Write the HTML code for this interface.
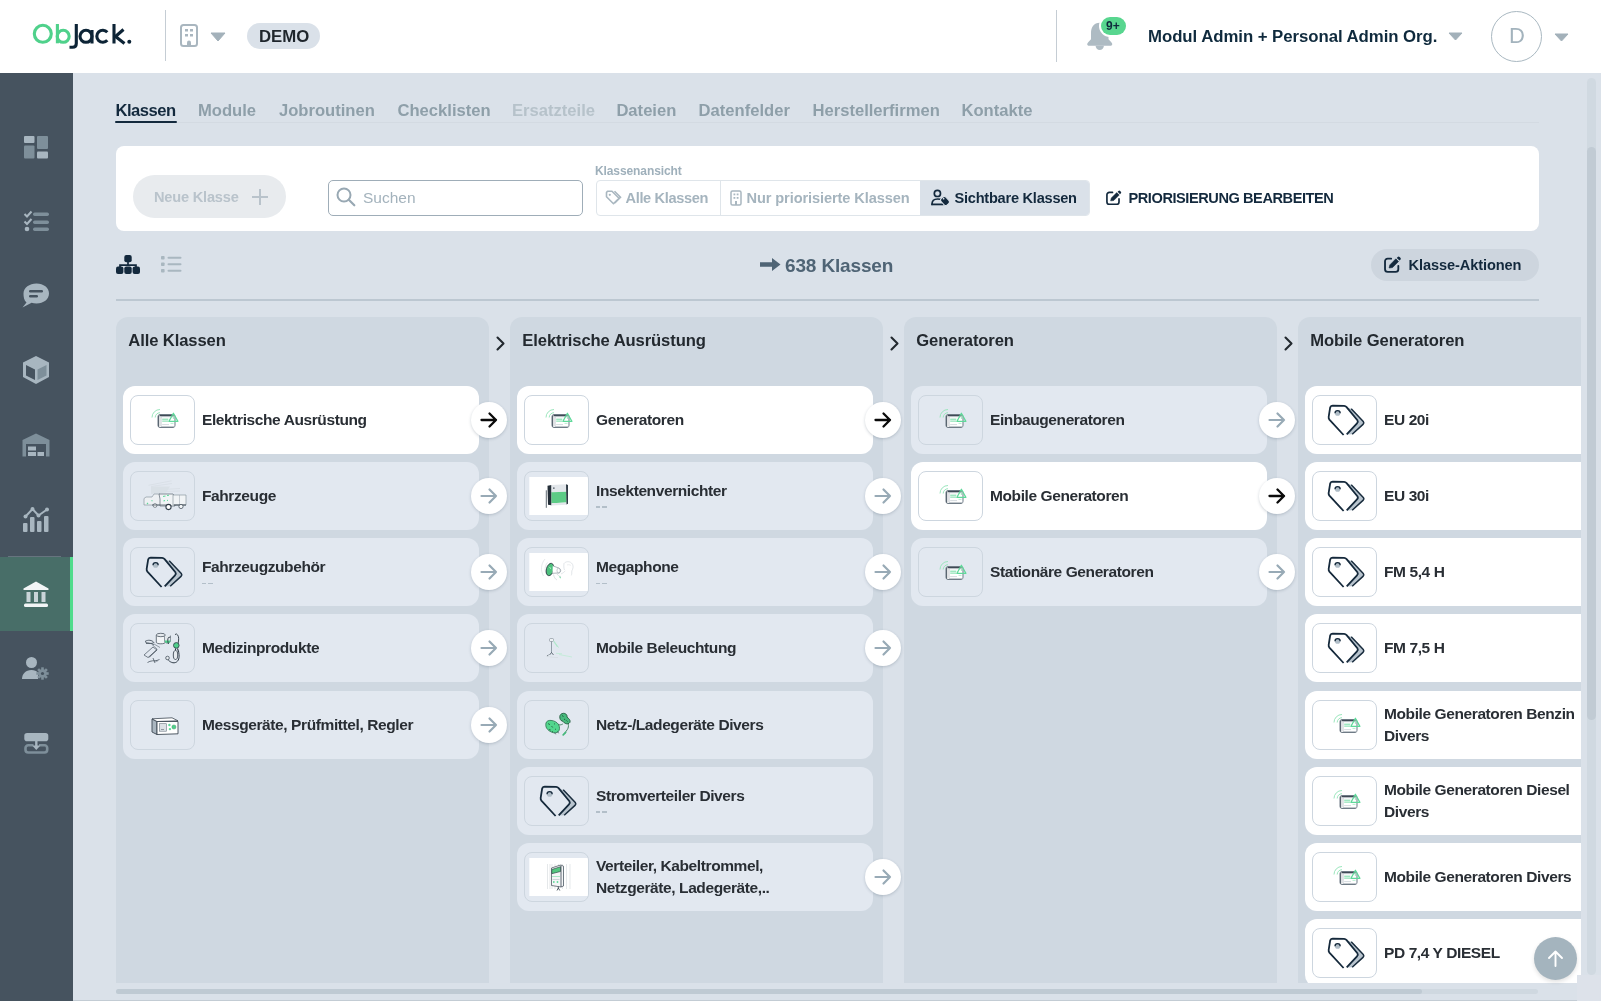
<!DOCTYPE html><html><head><meta charset="utf-8"><style>
*{box-sizing:border-box;margin:0;padding:0}
html,body{width:1601px;height:1001px;overflow:hidden}
body{position:relative;will-change:transform;background:#dae1e9;font-family:"Liberation Sans",sans-serif;color:#23292f}
.a{position:absolute}
.t{position:absolute;white-space:nowrap;line-height:1}
.b{font-weight:700}
.tab{position:absolute;top:102.5px;font-size:16.6px;font-weight:700;color:#8e9fa9;white-space:nowrap;line-height:1}
.col{position:absolute;top:317px;width:373px;height:666px;background:#cfd8e1;border-radius:12px 12px 0 0}
.ch{position:absolute;left:12.3px;top:15.5px;font-size:16.6px;font-weight:700;color:#23292f;white-space:nowrap;line-height:1;letter-spacing:-0.1px}
.card{position:absolute;width:356px;height:68px;background:#e2e8f0;border-radius:12px}
.card.w{background:#fff}
.th{position:absolute;left:7px;top:9px;width:65px;height:50px;border:1px solid #cdd6df;border-radius:8px;overflow:hidden}
.ct{position:absolute;left:79px;font-size:15.5px;font-weight:700;color:#292e34;white-space:nowrap;line-height:1;letter-spacing:-0.4px}
.dash{position:absolute;left:79px;width:10.5px;height:1.3px;background:linear-gradient(90deg,#b3bfc9 0 4.3px,transparent 4.3px 6.2px,#b3bfc9 6.2px)}
.arr{position:absolute;width:36px;height:36px;border-radius:50%;background:#fff;box-shadow:0 1px 3px rgba(60,80,100,0.25)}
.arr svg{position:absolute;left:9px;top:9px}
.chev{position:absolute;top:335px}
</style></head><body>
<div class="a" style="left:0;top:0;width:1601px;height:73px;background:#fff">
<svg class="a" style="left:0;top:0" width="140" height="60" viewBox="0 0 140 60"><g fill="none" stroke-width="3.1" stroke-linecap="round"><circle cx="42.8" cy="33.8" r="8.5" stroke="#4fd18b"/><path d="M57.4 24v19.3" stroke="#4fd18b" stroke-linecap="butt"/><circle cx="63.2" cy="36.3" r="6" stroke="#4fd18b"/><path d="M76.3 24V43.5Q76.3 47.3 72.5 47.3H69.5" stroke="#0d2436" stroke-linecap="butt"/><circle cx="86" cy="36.3" r="6" stroke="#0d2436"/><path d="M92 30v13.5" stroke="#0d2436" stroke-linecap="butt"/><path d="M107.3 32.3A6 6 0 1 0 107.3 40.3" stroke="#0d2436" stroke-linecap="butt"/><path d="M114 24v19.5" stroke="#0d2436" stroke-linecap="butt"/><path d="M123.5 29.5L115.5 36.5L124.5 43.5" stroke="#0d2436" stroke-linecap="butt" stroke-linejoin="round"/></g><circle cx="129.3" cy="41.8" r="2" fill="#0d2436"/></svg>
<div class="a" style="left:165px;top:10px;width:1px;height:51px;background:#c5cdd4"></div>
<svg class="a" style="left:180px;top:24px" width="18" height="23" viewBox="0 0 18 23"><rect x="1" y="1" width="16" height="21" rx="2.5" fill="none" stroke="#a9b6bf" stroke-width="2"/><rect x="5" y="5" width="3" height="2.5" fill="#a9b6bf"/><rect x="10" y="5" width="3" height="2.5" fill="#a9b6bf"/><rect x="5" y="10" width="3" height="2.5" fill="#a9b6bf"/><rect x="10" y="10" width="3" height="2.5" fill="#a9b6bf"/><path d="M7 22v-3.5a2 2 0 0 1 4 0V22z" fill="#a9b6bf"/></svg>
<svg class="a" style="left:210px;top:32px" width="16" height="10" viewBox="0 0 16 10"><path d="M1 1h14l-7 8z" fill="#a3b1ba" stroke="#a3b1ba" stroke-width="1" stroke-linejoin="round"/></svg>
<div class="a" style="left:247px;top:23px;width:73px;height:26px;border-radius:13px;background:#dae1e9"></div>
<div class="t b" style="left:259px;top:29px;font-size:16.8px;color:#1f262c">DEMO</div>
<div class="a" style="left:1055.5px;top:10px;width:1px;height:52px;background:#c5cdd4"></div>
<svg class="a" style="left:1086px;top:20px" width="28" height="32" viewBox="0 0 28 32"><path d="M13.75 2.8C7.8 2.8 5 7.5 5 13V19.3L2.2 22.3C0.6 24 1.1 25.8 3.2 25.8H24.3C26.4 25.8 26.9 24 25.3 22.3L22.5 19.3V13C22.5 7.5 19.7 2.8 13.75 2.8Z" fill="#aebbc3"/><path d="M9.6 25.8A4.15 4.15 0 0 0 17.9 25.8Z" fill="#aebbc3"/></svg>
<div class="a" style="left:1099px;top:15px;width:29px;height:22px;border-radius:11px;background:#fff"></div>
<div class="a" style="left:1101px;top:17px;width:25px;height:18px;border-radius:9px;background:#58d68f"></div>
<div class="t b" style="left:1106px;top:20px;font-size:12px;color:#0f2a3d">9+</div>
<div class="t b" style="left:1148px;top:28.5px;font-size:16.8px;color:#0f2a3d;letter-spacing:-0.05px">Modul Admin + Personal Admin Org.</div>
<svg class="a" style="left:1448px;top:32px" width="15" height="9" viewBox="0 0 15 9"><path d="M1 1h13l-6.5 7z" fill="#a3b1ba" stroke="#a3b1ba" stroke-linejoin="round"/></svg>
<div class="a" style="left:1491px;top:10.5px;width:51px;height:51px;border-radius:50%;border:1.2px solid #a9b8c1"></div>
<div class="t" style="left:1509px;top:25px;font-size:22px;color:#a3b3bd">D</div>
<svg class="a" style="left:1554px;top:33px" width="15" height="9" viewBox="0 0 15 9"><path d="M1 1h13l-6.5 7z" fill="#a3b1ba" stroke="#a3b1ba" stroke-linejoin="round"/></svg>
</div>
<div class="a" style="left:0;top:73px;width:73px;height:928px;background:#46535f"></div>
<svg class="a" style="left:24px;top:136px" width="24" height="23" viewBox="0 0 24 23"><rect x="0" y="0" width="10.5" height="7" rx="1" fill="#a8b6c0"/><rect x="13" y="0" width="11" height="13" rx="1" fill="#7e8f9a"/><rect x="0" y="9.5" width="10.5" height="13" rx="1" fill="#7e8f9a"/><rect x="13" y="15.5" width="11" height="7" rx="1" fill="#a8b6c0"/></svg>
<svg class="a" style="left:23px;top:210px" width="27" height="22" viewBox="0 0 27 22"><path d="M1.5 4l2.5 2.5 4.5-5" fill="none" stroke="#a8b6c0" stroke-width="2"/><path d="M1.5 11.5l2.5 2.5 4.5-5" fill="none" stroke="#a8b6c0" stroke-width="2"/><circle cx="4" cy="19" r="2.3" fill="#a8b6c0"/><rect x="10" y="2.5" width="16" height="3.5" rx="1.7" fill="#7e8f9a"/><rect x="10" y="10.5" width="16" height="3.5" rx="1.7" fill="#7e8f9a"/><rect x="10" y="17.5" width="16" height="3.5" rx="1.7" fill="#7e8f9a"/></svg>
<svg class="a" style="left:22px;top:283px" width="28" height="25" viewBox="0 0 28 25"><path d="M14.5 0.5C21.5 0.5 27 4.8 27 10.5S21.5 20.5 14.5 20.5c-1.8 0-3.4-.3-4.9-.8L0.5 24.5l4-5C2 17.500 1.5 14 1.5 10.5 1.5 4.8 7.5 0.5 14.5 0.5z" fill="#a8b6c0"/><rect x="7" y="7" width="14" height="2.5" rx="1.2" fill="#46535f"/><rect x="7" y="12" width="9" height="2.5" rx="1.2" fill="#46535f"/></svg>
<svg class="a" style="left:21px;top:355px" width="30" height="30" viewBox="0 0 30 30"><path d="M15 1L28 7.5V22L15 29 2 22V7.5z" fill="#a8b6c0"/><path d="M5 10l9 4.5V25L5 20.5z" fill="#46535f"/><path d="M16.5 14.5L25.5 10v10.5L16.5 25z" fill="#7e8f9a"/></svg>
<svg class="a" style="left:22px;top:433px" width="28" height="24" viewBox="0 0 28 24"><path d="M0.5 23.5V7L14 0.5 27.5 7V23.5H24V11H4V23.5z" fill="#7e8f9a"/><rect x="6" y="13.5" width="8" height="4" fill="#a8b6c0"/><rect x="6" y="19" width="8" height="4" fill="#a8b6c0"/><rect x="15.5" y="19" width="6.5" height="4" fill="#a8b6c0"/></svg>
<svg class="a" style="left:23px;top:507px" width="27" height="25" viewBox="0 0 27 25"><path d="M2.5 9.5L9.5 2 15.5 8.5 24 2.5" fill="none" stroke="#a8b6c0" stroke-width="2"/><circle cx="2.5" cy="9.5" r="2" fill="#a8b6c0"/><circle cx="9.5" cy="2" r="2" fill="#a8b6c0"/><circle cx="15.5" cy="8.5" r="2" fill="#a8b6c0"/><circle cx="24" cy="2.5" r="2" fill="#a8b6c0"/><rect x="0" y="16" width="4.5" height="9" rx="1" fill="#a8b6c0"/><rect x="7" y="10" width="4.5" height="15" rx="1" fill="#a8b6c0"/><rect x="14" y="14" width="4.5" height="11" rx="1" fill="#a8b6c0"/><rect x="21" y="9" width="4.5" height="16" rx="1" fill="#a8b6c0"/></svg>
<div class="a" style="left:8px;top:555.5px;width:53px;height:1px;background:#67747f"></div>
<div class="a" style="left:0;top:557px;width:73px;height:74px;background:#486e68"></div>
<div class="a" style="left:70px;top:557px;width:3px;height:74px;background:#50dc8c"></div>
<svg class="a" style="left:23px;top:581px" width="26" height="27" viewBox="0 0 26 27"><path d="M13 0.5L25.5 7.5V9H0.5V7.5z" fill="#f2f5f6"/><rect x="3.5" y="11" width="4" height="10" fill="#c9d4d8"/><rect x="11" y="11" width="4" height="10" fill="#c9d4d8"/><rect x="18.5" y="11" width="4" height="10" fill="#c9d4d8"/><rect x="1" y="22.5" width="24" height="3.5" rx="1.5" fill="#f2f5f6"/></svg>
<svg class="a" style="left:22px;top:657px" width="28" height="23" viewBox="0 0 28 23"><circle cx="9.5" cy="5.5" r="5.5" fill="#a8b6c0"/><path d="M0 22c0-5 3.5-9 9.5-9 3 0 5 1 6.5 2.5V22z" fill="#a8b6c0"/><g transform="translate(20.5,16.5)"><circle r="4.2" fill="#7e8f9a"/><circle r="1.6" fill="#46535f"/><g fill="#7e8f9a"><rect x="-1.3" y="-6.2" width="2.6" height="3"/><rect x="-1.3" y="3.2" width="2.6" height="3"/><rect x="-6.2" y="-1.3" width="3" height="2.6"/><rect x="3.2" y="-1.3" width="3" height="2.6"/><rect x="-1.3" y="-6.2" width="2.6" height="3" transform="rotate(45)"/><rect x="-1.3" y="3.2" width="2.6" height="3" transform="rotate(45)"/><rect x="-6.2" y="-1.3" width="3" height="2.6" transform="rotate(45)"/><rect x="3.2" y="-1.3" width="3" height="2.6" transform="rotate(45)"/></g></g></svg>
<svg class="a" style="left:24px;top:732px" width="25" height="23" viewBox="0 0 25 23"><rect x="0.3" y="1" width="24" height="8.2" rx="2.8" fill="#a8b6c0"/><path d="M9.5 13.3H4.2A2.7 2.7 0 0 0 1.5 16V17.8A2.7 2.7 0 0 0 4.2 20.5H20.5A2.7 2.7 0 0 0 23.2 17.8V16A2.7 2.7 0 0 0 20.5 13.3H15" fill="none" stroke="#7e8f9a" stroke-width="2.6"/><path d="M12.3 8v7" stroke="#a8b6c0" stroke-width="2.4"/><path d="M8.2 13.5L12.3 18 16.4 13.5z" fill="#a8b6c0"/></svg>
<div class="a" style="left:115px;top:122px;width:1424px;height:1px;background:#d3dae2"></div>
<div class="tab" style="left:115.5px;color:#13293d;letter-spacing:-0.5px">Klassen</div>
<div class="tab" style="left:198px">Module</div>
<div class="tab" style="left:279px">Jobroutinen</div>
<div class="tab" style="left:397.5px">Checklisten</div>
<div class="tab" style="left:512px;color:#b6c2ca">Ersatzteile</div>
<div class="tab" style="left:616.4px">Dateien</div>
<div class="tab" style="left:698.6px">Datenfelder</div>
<div class="tab" style="left:812.5px">Herstellerfirmen</div>
<div class="tab" style="left:961.5px">Kontakte</div>
<div class="a" style="left:115px;top:121px;width:62px;height:2.2px;background:#13293d;border-radius:1px"></div>
<div class="a" style="left:116px;top:146px;width:1423px;height:85px;background:#fff;border-radius:8px"></div>
<div class="a" style="left:133px;top:175px;width:153px;height:43px;border-radius:22px;background:#e8ebee"></div>
<div class="t b" style="left:154px;top:190px;font-size:14.6px;color:#b9c3cb;letter-spacing:-0.2px">Neue Klasse</div>
<svg class="a" style="left:251px;top:188px" width="18" height="18" viewBox="0 0 18 18"><path d="M9 1v16M1 9h16" stroke="#b9c3cb" stroke-width="2"/></svg>
<div class="a" style="left:328px;top:180px;width:255px;height:36px;border:1.5px solid #9fadb8;border-radius:5px;background:#fff"></div>
<svg class="a" style="left:336px;top:187px" width="20" height="20" viewBox="0 0 20 20"><circle cx="8" cy="8" r="6.5" fill="none" stroke="#98a8b3" stroke-width="2"/><path d="M12.8 12.8l5.5 5.5" stroke="#98a8b3" stroke-width="2.2" stroke-linecap="round"/></svg>
<div class="t" style="left:363px;top:190px;font-size:15.5px;color:#a3b2bc">Suchen</div>
<div class="t b" style="left:595px;top:165px;font-size:12px;color:#9fb0bb;letter-spacing:-0.1px">Klassenansicht</div>
<div class="a" style="left:595.5px;top:180px;width:494px;height:35.5px;border:1px solid #dfe5ea;border-radius:4px;background:#fff;overflow:hidden"><div class="a" style="left:323px;top:0;width:171px;height:36px;background:#dae1e9"></div><div class="a" style="left:123px;top:0;width:1.5px;height:36px;background:#dfe5ea"></div></div>
<svg class="a" style="left:605px;top:190px" width="17" height="16" viewBox="0 0 17 16"><path d="M1.5 2.5v4.2l7 7 5.5-5.5-7-7H2.5z" fill="none" stroke="#a9b7c0" stroke-width="1.6" stroke-linejoin="round"/><path d="M9.5 1.2l6 6-5.7 5.7" fill="none" stroke="#a9b7c0" stroke-width="1.6"/><circle cx="4.8" cy="4.8" r="1.1" fill="#a9b7c0"/></svg>
<div class="t b" style="left:625.5px;top:191px;font-size:14.6px;color:#a5b4be;letter-spacing:-0.35px">Alle Klassen</div>
<svg class="a" style="left:730px;top:190px" width="12" height="16" viewBox="0 0 12 16"><rect x="1" y="1" width="10" height="14" rx="1.5" fill="none" stroke="#a9b7c0" stroke-width="1.5"/><rect x="3.5" y="3.5" width="1.8" height="1.8" fill="#a9b7c0"/><rect x="6.7" y="3.5" width="1.8" height="1.8" fill="#a9b7c0"/><rect x="3.5" y="7" width="1.8" height="1.8" fill="#a9b7c0"/><rect x="6.7" y="7" width="1.8" height="1.8" fill="#a9b7c0"/><rect x="5" y="11" width="2" height="4" fill="#a9b7c0"/></svg>
<div class="t b" style="left:746.5px;top:191px;font-size:14.6px;color:#a5b4be;letter-spacing:-0.1px">Nur priorisierte Klassen</div>
<svg class="a" style="left:925px;top:182px" width="30" height="30" viewBox="0 0 30 30"><circle cx="12.4" cy="11.4" r="3.1" fill="none" stroke="#13293d" stroke-width="1.7"/><path d="M7 22.3C7 18.6 9.5 17 12.5 17c1 0 2 .1 2.8.3" fill="none" stroke="#13293d" stroke-width="1.7" stroke-linecap="round"/><path d="M6.3 22.4H18.5" stroke="#13293d" stroke-width="1.8"/><rect x="16.8" y="14.6" width="6.4" height="8.8" rx="2.2" transform="rotate(-42 20 19)" fill="#13293d" stroke="#dae1e9" stroke-width="1"/><circle cx="18.6" cy="16.7" r="0.85" fill="#dae1e9"/></svg>
<div class="t b" style="left:954.5px;top:191px;font-size:14.6px;color:#13293d;letter-spacing:-0.25px">Sichtbare Klassen</div>
<svg class="a" style="left:1105.8px;top:189.6px" width="15.8" height="15.8" viewBox="0 0 17 17"><path d="M7 2.6H3.6A2.6 2.6 0 0 0 1 5.2V12.9A2.6 2.6 0 0 0 3.6 15.5H11.4A2.6 2.6 0 0 0 14 12.9V9.6" fill="none" stroke="#13293d" stroke-width="1.8" stroke-linecap="round"/><path d="M5 11.7L5.7 8.7 11.6 2.8 14.2 5.4 8.3 11.3Z" fill="#13293d" stroke="#13293d" stroke-width="0.6" stroke-linejoin="round"/><path d="M12.5 1.9L13.4 1A1.3 1.3 0 0 1 15.2 1L16 1.8A1.3 1.3 0 0 1 16 3.6L15.1 4.5Z" fill="#13293d"/></svg>
<div class="t b" style="left:1128.5px;top:191px;font-size:14.6px;color:#13293d;letter-spacing:-0.45px">PRIORISIERUNG BEARBEITEN</div>
<svg class="a" style="left:115.5px;top:255px" width="24" height="19" viewBox="0 0 24 19"><rect x="8.3" y="0" width="7.4" height="7.2" rx="2" fill="#13293d"/><path d="M12 6v4.5M4 13v-2.8h16V13" fill="none" stroke="#13293d" stroke-width="1.7"/><rect x="0" y="11.6" width="7.4" height="7.4" rx="2" fill="#13293d"/><rect x="8.3" y="11.6" width="7.4" height="7.4" rx="2" fill="#13293d"/><rect x="16.6" y="11.6" width="7.4" height="7.4" rx="2" fill="#13293d"/></svg>
<svg class="a" style="left:161px;top:256px" width="22" height="18" viewBox="0 0 22 18"><g fill="#a9b7c0"><rect x="0" y="0" width="3.6" height="3.6" rx="0.8"/><rect x="0" y="6.5" width="3.6" height="3.6" rx="0.8"/><rect x="0" y="13" width="3.6" height="3.6" rx="0.8"/><rect x="6.5" y="0.8" width="14" height="2" rx="1"/><rect x="6.5" y="7.3" width="14" height="2" rx="1"/><rect x="6.5" y="13.8" width="14" height="2" rx="1"/></g></svg>
<svg class="a" style="left:760px;top:258px" width="21" height="13" viewBox="0 0 21 13"><path d="M0 4.3h12V0l8.5 6.5L12 13V8.7H0z" fill="#4f6475"/></svg>
<div class="t b" style="left:785px;top:256px;font-size:19px;color:#4f6475;letter-spacing:-0.15px">638 Klassen</div>
<div class="a" style="left:1371px;top:249px;width:168px;height:32px;border-radius:16px;background:#cdd5de"></div>
<svg class="a" style="left:1383.6px;top:256px" width="17.4" height="17.4" viewBox="0 0 17 17"><path d="M7 2.6H3.6A2.6 2.6 0 0 0 1 5.2V12.9A2.6 2.6 0 0 0 3.6 15.5H11.4A2.6 2.6 0 0 0 14 12.9V9.6" fill="none" stroke="#13293d" stroke-width="1.8" stroke-linecap="round"/><path d="M5 11.7L5.7 8.7 11.6 2.8 14.2 5.4 8.3 11.3Z" fill="#13293d" stroke="#13293d" stroke-width="0.6" stroke-linejoin="round"/><path d="M12.5 1.9L13.4 1A1.3 1.3 0 0 1 15.2 1L16 1.8A1.3 1.3 0 0 1 16 3.6L15.1 4.5Z" fill="#13293d"/></svg>
<div class="t b" style="left:1408.5px;top:258px;font-size:14.6px;color:#13293d;letter-spacing:-0.1px">Klasse-Aktionen</div>
<div class="a" style="left:116px;top:299px;width:1423px;height:2px;background:#bcc7d1"></div>
<div class="a" style="left:0;top:0;width:1581px;height:983px;overflow:hidden">
<div class="col" style="left:116px"><div class="ch">Alle Klassen</div></div>
<div class="card w" style="left:123px;top:385.5px"><div class="th"><svg width="64" height="48" viewBox="0 0 64 48" style="position:absolute;left:-1px;top:0"><path d="M22 21.5A8 8 0 0 1 30 13.5M25.2 21.5A4.8 4.8 0 0 1 30 16.7" fill="none" stroke="#9be6bd" stroke-width="1"/><rect x="28" y="18.5" width="17" height="13" rx="2" fill="#fff" stroke="#6f7b86" stroke-width="1"/><path d="M29.5 19.6H43.5" stroke="#3f4a55" stroke-width="1.1"/><rect x="31" y="20.8" width="13.5" height="9.8" fill="#fff" stroke="#9aa4ad" stroke-width="0.6"/><path d="M28.6 20v10.5" stroke="#5a6671" stroke-width="1.2"/><path d="M32.2 23.2H38.3M32.2 25.1H38" stroke="#74dca5" stroke-width="1"/><path d="M32.2 28.6H39" stroke="#c9d0d6" stroke-width="0.8"/><path d="M40.5 27.4H43.5" stroke="#9be6bd" stroke-width="0.7"/><path d="M43.4 17.2L47.9 25.4H38.9Z" fill="none" stroke="#5fd99a" stroke-width="1.2" stroke-linejoin="round"/><path d="M43.4 20.5v2.5" stroke="#8be3b2" stroke-width="0.8"/></svg></div><div class="ct" style="top:26px">Elektrische Ausrüstung</div></div>
<div class="arr" style="left:471px;top:401.5px"><svg width="18" height="18" viewBox="0 0 18 18"><path d="M1.5 9h14.5M9.5 2.5L16 9l-6.5 6.5" fill="none" stroke="#0a0a0a" stroke-width="2.3" stroke-linecap="round" stroke-linejoin="round"/></svg></div>
<div class="card" style="left:123px;top:461.75px"><div class="th"><svg width="64" height="48" viewBox="0 0 64 48" style="position:absolute;left:-1px;top:0"><path d="M18.5 13.3L41.5 8.8M21 14.5L42 11.5M33 17.5L50 16.5M32 19.5L50 19" stroke="#d3dae0" stroke-width="0.6" fill="none"/><path d="M21 14.5L21 22L36 20.5L40 14.5Z" fill="#d9e0e6"/><path d="M14 26.5L16 25H22L24 22H30L33 28V33H14Z" fill="#edf0f3" stroke="#7d8994" stroke-width="0.6"/><path d="M29 22H43L45 25V34H30V27Z" fill="#f1f4f6" stroke="#5a6671" stroke-width="0.7"/><path d="M43 23H56V33H43Z" fill="#f1f4f6" stroke="#7d8994" stroke-width="0.6"/><path d="M49.5 23V33" stroke="#9aa5ae" stroke-width="0.5"/><path d="M44 33H56" stroke="#3d4853" stroke-width="1"/><circle cx="38.5" cy="35" r="2.6" fill="#fff" stroke="#2f3b46" stroke-width="1.1"/><circle cx="51" cy="34.5" r="2.1" fill="#f6f8f9" stroke="#4a5661" stroke-width="0.8"/><circle cx="25" cy="33.5" r="1.9" fill="#f6f8f9" stroke="#5a6671" stroke-width="0.7"/><path d="M22 33H36" stroke="#4a5661" stroke-width="0.8"/><path d="M33 24.5L35.5 24M37 23.5L39 23.3M33.5 29L35 28.5M37 28.5L38 28.3M21.5 28.5L22.5 29M17 31L18 32" stroke="#5fd99a" stroke-width="1.1"/></svg></div><div class="ct" style="top:26px">Fahrzeuge</div></div>
<div class="arr" style="left:471px;top:477.75px"><svg width="18" height="18" viewBox="0 0 18 18"><path d="M1.5 9h14.5M9.5 2.5L16 9l-6.5 6.5" fill="none" stroke="#98aab6" stroke-width="2.2" stroke-linecap="round" stroke-linejoin="round"/></svg></div>
<div class="card" style="left:123px;top:538.0px"><div class="th"><svg width="64" height="48" viewBox="0 0 64 48" style="position:absolute;left:-1px;top:0"><path d="M34.5 11.2L39.2 12.7 51.3 25.5Q52.5 27 51 28.4L40.2 38.2 34.7 38.5 45 27.5Q46.4 26 45.5 24.5Z" fill="#b8c4ce"/><path d="M39.2 12.7L51.3 25.5Q52.5 27 51 28.4L40.2 38.2" fill="none" stroke="#1a2d3e" stroke-width="1.5" stroke-linejoin="round"/><path d="M31.6 39L17.4 23.6Q16.4 22.3 16.7 20.6L18.1 11.8Q18.6 9.6 20.8 9.6L32 9.9Q33.6 10.1 34.6 11.1L45.4 24.3Q46.5 25.9 45 27.4L34.7 38.4" fill="none" stroke="#15293b" stroke-width="1.8" stroke-linejoin="round"/><circle cx="25.6" cy="17.2" r="2.6" fill="#b0bdc7"/><path d="M23 17.2A2.6 2.6 0 0 1 28.2 17.2" fill="none" stroke="#15293b" stroke-width="1.3"/></svg></div><div class="ct" style="top:21px">Fahrzeugzubehör</div><div class="dash" style="top:44.5px"></div></div>
<div class="arr" style="left:471px;top:554.0px"><svg width="18" height="18" viewBox="0 0 18 18"><path d="M1.5 9h14.5M9.5 2.5L16 9l-6.5 6.5" fill="none" stroke="#98aab6" stroke-width="2.2" stroke-linecap="round" stroke-linejoin="round"/></svg></div>
<div class="card" style="left:123px;top:614.25px"><div class="th"><svg width="64" height="48" viewBox="0 0 64 48" style="position:absolute;left:-1px;top:0"><path d="M26.3 11v7.2c0 1 2 1.6 4.5 1.6s4.5-.6 4.5-1.6V11" fill="#f2f4f6" stroke="#4a5661" stroke-width="0.8"/><ellipse cx="30.8" cy="11" rx="4.5" ry="1.7" fill="#e6eaee" stroke="#4a5661" stroke-width="0.8"/><path d="M34.5 11.5v5.5c0 1.3 1.5 2.2 3 2.2s3-.9 3-2.2v-5.5" fill="#e2e7eb" stroke="#6b7782" stroke-width="0.7"/><path d="M34.6 16.5c0 1.6 1.4 2.6 3 2.6s3-1 3-2.6z" fill="#4fd08a"/><path d="M15 17.5c3-2 7-1.5 9 1-2.5 1.5-7 1.5-9-1zM16 19.5c3-1 6 0 8 1.5" fill="none" stroke="#4a5661" stroke-width="0.9"/><path d="M22 20.5l5 4.5M24 20l6 3.5" stroke="#6b7782" stroke-width="0.7"/><path d="M14 31l9-8 4 3-9 7.5z" fill="none" stroke="#5a6671" stroke-width="0.8"/><path d="M19 33.5l8-8" stroke="#3d4853" stroke-width="0.9"/><path d="M17.5 38.5c3-2 7-2 10-1.5M23 34l2 5M25.5 37l4-1.5" fill="none" stroke="#4a5661" stroke-width="0.8"/><path d="M38.5 20c-1-3-1-5 0-6.5l2-.5M45 10.5l1.5-.5c2 1 2.5 4 2 7-.5 3-1 6-3.5 7" fill="none" stroke="#3d4853" stroke-width="1"/><circle cx="46.3" cy="21.4" r="2.8" fill="#4fd08a" stroke="#2f3b46" stroke-width="0.8"/><path d="M45.5 24.5v2M47.5 24.5l1 3" stroke="#2f3b46" stroke-width="1.1"/><ellipse cx="45.5" cy="31" rx="2.2" ry="4.5" fill="#e6eaee" stroke="#3d4853" stroke-width="0.9"/><path d="M48.5 27c1 5 1 9-2 11s-7 0-9-3" fill="none" stroke="#2f3b46" stroke-width="1"/><circle cx="37.5" cy="34" r="1.8" fill="#e6eaee" stroke="#4a5661" stroke-width="0.8"/></svg></div><div class="ct" style="top:26px">Medizinprodukte</div></div>
<div class="arr" style="left:471px;top:630.25px"><svg width="18" height="18" viewBox="0 0 18 18"><path d="M1.5 9h14.5M9.5 2.5L16 9l-6.5 6.5" fill="none" stroke="#98aab6" stroke-width="2.2" stroke-linecap="round" stroke-linejoin="round"/></svg></div>
<div class="card" style="left:123px;top:690.5px"><div class="th"><svg width="64" height="48" viewBox="0 0 64 48" style="position:absolute;left:-1px;top:0"><path d="M22 18L27 20.5V33.5L22 31Z" fill="#aab6c0" stroke="#3d4853" stroke-width="0.9" stroke-linejoin="round"/><path d="M22 17.8L42 16.8 48 19.8 27 20.5Z" fill="#fff" stroke="#3d4853" stroke-width="0.8" stroke-linejoin="round"/><path d="M27 20.5H48V32.8L27 33.5Z" fill="#fff" stroke="#3d4853" stroke-width="0.9" stroke-linejoin="round"/><rect x="29.4" y="22.7" width="7" height="7.5" fill="#dde2e6" stroke="#6b7782" stroke-width="0.6"/><path d="M31 28.5h3" stroke="#5a6671" stroke-width="0.6"/><circle cx="39.4" cy="24" r="1.2" fill="#5fd99a"/><circle cx="39.9" cy="28.1" r="1.2" fill="#5fd99a"/><circle cx="43.9" cy="26" r="2.1" fill="#4fd08a" stroke="#3d8a5f" stroke-width="0.4"/></svg></div><div class="ct" style="top:26px">Messgeräte, Prüfmittel, Regler</div></div>
<div class="arr" style="left:471px;top:706.5px"><svg width="18" height="18" viewBox="0 0 18 18"><path d="M1.5 9h14.5M9.5 2.5L16 9l-6.5 6.5" fill="none" stroke="#98aab6" stroke-width="2.2" stroke-linecap="round" stroke-linejoin="round"/></svg></div>
<svg class="a" style="left:496px;top:335.5px" width="10" height="15" viewBox="0 0 10 15"><path d="M1.5 1.5l6 6-6 6" fill="none" stroke="#23292f" stroke-width="2.1" stroke-linecap="round" stroke-linejoin="round"/></svg>
<div class="col" style="left:510px"><div class="ch">Elektrische Ausrüstung</div></div>
<div class="card w" style="left:517px;top:385.5px"><div class="th"><svg width="64" height="48" viewBox="0 0 64 48" style="position:absolute;left:-1px;top:0"><path d="M22 21.5A8 8 0 0 1 30 13.5M25.2 21.5A4.8 4.8 0 0 1 30 16.7" fill="none" stroke="#9be6bd" stroke-width="1"/><rect x="28" y="18.5" width="17" height="13" rx="2" fill="#fff" stroke="#6f7b86" stroke-width="1"/><path d="M29.5 19.6H43.5" stroke="#3f4a55" stroke-width="1.1"/><rect x="31" y="20.8" width="13.5" height="9.8" fill="#fff" stroke="#9aa4ad" stroke-width="0.6"/><path d="M28.6 20v10.5" stroke="#5a6671" stroke-width="1.2"/><path d="M32.2 23.2H38.3M32.2 25.1H38" stroke="#74dca5" stroke-width="1"/><path d="M32.2 28.6H39" stroke="#c9d0d6" stroke-width="0.8"/><path d="M40.5 27.4H43.5" stroke="#9be6bd" stroke-width="0.7"/><path d="M43.4 17.2L47.9 25.4H38.9Z" fill="none" stroke="#5fd99a" stroke-width="1.2" stroke-linejoin="round"/><path d="M43.4 20.5v2.5" stroke="#8be3b2" stroke-width="0.8"/></svg></div><div class="ct" style="top:26px">Generatoren</div></div>
<div class="arr" style="left:865px;top:401.5px"><svg width="18" height="18" viewBox="0 0 18 18"><path d="M1.5 9h14.5M9.5 2.5L16 9l-6.5 6.5" fill="none" stroke="#0a0a0a" stroke-width="2.3" stroke-linecap="round" stroke-linejoin="round"/></svg></div>
<div class="card" style="left:517px;top:461.75px"><div class="th"><svg width="64" height="48" viewBox="0 0 64 48" style="position:absolute;left:-1px;top:0"><rect x="5.3" y="5" width="60" height="38" fill="#fff"/><g transform="translate(0 4.8)"><path d="M22.3 13.5V31" stroke="#3a4550" stroke-width="0.8"/><path d="M23.5 9L27.5 8.3V28.5L24 28Z" fill="#242e38"/><path d="M27.5 8.3L42.5 7.5V15L27.5 15.5Z" fill="#e3e7eb"/><path d="M27.5 15.5L42.5 15V25.8L27.5 26.5Z" fill="#5ccb85"/><path d="M27.5 26.5L42.5 25.8V28L27.5 28.6Z" fill="#e3e7eb"/><path d="M42 7.5L44 8.2V27L42.5 27.8Z" fill="#2f3a44"/><rect x="29" y="10.8" width="1.6" height="1" fill="#2f3a44"/></g></svg></div><div class="ct" style="top:21px">Insektenvernichter</div><div class="dash" style="top:44.5px"></div></div>
<div class="arr" style="left:865px;top:477.75px"><svg width="18" height="18" viewBox="0 0 18 18"><path d="M1.5 9h14.5M9.5 2.5L16 9l-6.5 6.5" fill="none" stroke="#98aab6" stroke-width="2.2" stroke-linecap="round" stroke-linejoin="round"/></svg></div>
<div class="card" style="left:517px;top:538.0px"><div class="th"><svg width="64" height="48" viewBox="0 0 64 48" style="position:absolute;left:-1px;top:0"><rect x="5.3" y="5" width="60" height="38" fill="#fff"/><path d="M19.5 28c-3-5-2.8-12 1.5-17M22.5 26.5c-2-3.5-2-8.5 1-12" fill="none" stroke="#d5dade" stroke-width="0.6"/><ellipse cx="26" cy="21.5" rx="3.6" ry="6.3" transform="rotate(15 26 21.5)" fill="#4cc07c" stroke="#2a3640" stroke-width="0.8"/><path d="M25.5 19.5l1.5 1" stroke="#c9f0d8" stroke-width="1"/><path d="M28.8 17.8l6 2.3c1.8.8 2.4 2.5 1.5 3.8-.5.8-1.5 1.2-2.5 1.1l-5.3.3" fill="#fff" stroke="#8c969f" stroke-width="0.7"/><ellipse cx="34.6" cy="22.6" rx="1.6" ry="2.6" fill="none" stroke="#a3acb4" stroke-width="0.6"/><path d="M29.5 26.5c.5 2.5 1.5 4.5 3.5 5.5M33 26c1 1.5 2.5 2.5 4 2.5" fill="none" stroke="#c8ced3" stroke-width="0.6"/><path d="M35.5 28.5l1.2 1.6" stroke="#7fdca8" stroke-width="1.1"/><path d="M37 26c2-1 3.5-2 4.2-3.2M40 15.5c1.5-2 5-2.6 7.5-.5 1.8 1.6 2 4.3 1 6.5l-.6 1.3c-.4 1.5.2 3.3-.6 4.6M40.5 22c-.8-2-.8-4.5-.5-6.5" fill="none" stroke="#cfd5da" stroke-width="0.6"/><path d="M43 17c1.5-.5 3-.3 4 .5" fill="none" stroke="#d8dde1" stroke-width="0.5"/></svg></div><div class="ct" style="top:21px">Megaphone</div><div class="dash" style="top:44.5px"></div></div>
<div class="arr" style="left:865px;top:554.0px"><svg width="18" height="18" viewBox="0 0 18 18"><path d="M1.5 9h14.5M9.5 2.5L16 9l-6.5 6.5" fill="none" stroke="#98aab6" stroke-width="2.2" stroke-linecap="round" stroke-linejoin="round"/></svg></div>
<div class="card" style="left:517px;top:614.25px"><div class="th"><svg width="64" height="48" viewBox="0 0 64 48" style="position:absolute;left:-1px;top:0"><rect x="25.5" y="14.5" width="4" height="3" rx="1" fill="#eef1f4" stroke="#7a8691" stroke-width="0.6"/><path d="M27.5 17.5V29" stroke="#8a96a0" stroke-width="0.9"/><path d="M25.5 31L27.5 28.5 29.5 31M23 32l1.5-1" stroke="#4a5661" stroke-width="0.8" fill="none"/><path d="M29.5 16.5L34.5 23.5M30 18l3.5 5" stroke="#a8e8c4" stroke-width="0.8"/><path d="M32 29.3L38 29.8M35 30.5L48 33" stroke="#b9ecd0" stroke-width="0.7"/><path d="M22 32c4 1 8 1.5 12 1.5" stroke="#d0d6db" stroke-width="0.5" fill="none"/></svg></div><div class="ct" style="top:26px">Mobile Beleuchtung</div></div>
<div class="arr" style="left:865px;top:630.25px"><svg width="18" height="18" viewBox="0 0 18 18"><path d="M1.5 9h14.5M9.5 2.5L16 9l-6.5 6.5" fill="none" stroke="#98aab6" stroke-width="2.2" stroke-linecap="round" stroke-linejoin="round"/></svg></div>
<div class="card" style="left:517px;top:690.5px"><div class="th"><svg width="64" height="48" viewBox="0 0 64 48" style="position:absolute;left:-1px;top:0"><path d="M22 22c.5-1.8 2.5-2.8 5-2.6 3 .2 6 1.8 7.5 4 1.5 2.5 1.3 5.8-.3 7.3-1.2 1.1-3 1.4-4.8 1-2.8-.6-5.5-2.4-6.8-4.6-.9-1.5-1-3.4-.6-5.1z" fill="#52d68d" stroke="#2d6e4c" stroke-width="0.8"/><path d="M24 22.5l2 1.2M27.5 25l1.2 1.5M25 28.5l1.8.6M30 22.5l1 .8M31 28l1 .5M28 30.5l1 .3" stroke="#2a6447" stroke-width="0.9"/><path d="M30.5 31.5l1.2 1.8M33.5 30.3l1.2 2" stroke="#3a4a55" stroke-width="0.7"/><path d="M36 14.5c.8-1.8 3-2.6 4.8-2 1.6.5 2.6 2 2.2 3.6l1.8 1.6c1.3 1.1 1.6 2.7 1 3.8-.8 1.3-2.7 1.6-4 1.1-1.1-.4-2.1-1.1-2.6-2.1l-2.2-1.1c-1.1-1-1.5-3.3-1-4.9z" fill="#46b97c" stroke="#245c40" stroke-width="0.9"/><path d="M38 14.5l1.5 1M40 18l1.2.8M42.5 19.5l1 1" stroke="#1f5038" stroke-width="0.9"/><path d="M34 23.5c1.5.6 3.2.5 4.8-.5M44.2 23c.6 2 .1 4-.9 5.6-1 1.3-2 2.6-2.6 4.2" fill="none" stroke="#3a7a58" stroke-width="0.9"/><path d="M39.2 33.8l2.4-2.4" stroke="#46b97c" stroke-width="1.8" stroke-linecap="round"/></svg></div><div class="ct" style="top:26px">Netz-/Ladegeräte Divers</div></div>
<div class="card" style="left:517px;top:766.75px"><div class="th"><svg width="64" height="48" viewBox="0 0 64 48" style="position:absolute;left:-1px;top:0"><path d="M34.5 11.2L39.2 12.7 51.3 25.5Q52.5 27 51 28.4L40.2 38.2 34.7 38.5 45 27.5Q46.4 26 45.5 24.5Z" fill="#b8c4ce"/><path d="M39.2 12.7L51.3 25.5Q52.5 27 51 28.4L40.2 38.2" fill="none" stroke="#1a2d3e" stroke-width="1.5" stroke-linejoin="round"/><path d="M31.6 39L17.4 23.6Q16.4 22.3 16.7 20.6L18.1 11.8Q18.6 9.6 20.8 9.6L32 9.9Q33.6 10.1 34.6 11.1L45.4 24.3Q46.5 25.9 45 27.4L34.7 38.4" fill="none" stroke="#15293b" stroke-width="1.8" stroke-linejoin="round"/><circle cx="25.6" cy="17.2" r="2.6" fill="#b0bdc7"/><path d="M23 17.2A2.6 2.6 0 0 1 28.2 17.2" fill="none" stroke="#15293b" stroke-width="1.3"/></svg></div><div class="ct" style="top:21px">Stromverteiler Divers</div><div class="dash" style="top:44.5px"></div></div>
<div class="card" style="left:517px;top:843.0px"><div class="th"><svg width="64" height="48" viewBox="0 0 64 48" style="position:absolute;left:-1px;top:0"><rect x="5.3" y="5" width="60" height="38" fill="#fff"/><path d="M23.5 11v25M26 11v25M28 11v25M31 11v25M34.5 11v25M38.5 11v25M42.5 11v25M46 11v25" stroke="#d3d8dc" stroke-width="0.6"/><path d="M27.5 15l7.5-2.5 2-.5 2.5 1.2V33l-2.5 1-9.5-1.5Z" fill="#f4f6f7" stroke="#3d4853" stroke-width="0.7" stroke-linejoin="round"/><path d="M37 12.5V34" stroke="#3d4853" stroke-width="0.8"/><path d="M39.5 13.7V33" stroke="#6b7782" stroke-width="0.6"/><path d="M27.8 16.5l8.7-2.8v4.8l-8.7 2.2Z" fill="#53c77f" stroke="#2a3540" stroke-width="0.6"/><path d="M28 23.5h8" stroke="#a8e8c4" stroke-width="1.2"/><path d="M28.5 26.5h7" stroke="#aab3bb" stroke-width="0.5"/><circle cx="29.8" cy="29" r="0.9" fill="#5fd99a"/><circle cx="33.5" cy="29" r="0.9" fill="#5fd99a"/><path d="M34.3 33.5v1.5M33 37.5l1.3-2.5 1.5 2.5" stroke="#2f3b46" stroke-width="0.8" fill="none"/></svg></div><div class="ct" style="top:12px;line-height:22.3px">Verteiler, Kabeltrommel,<br>Netzgeräte, Ladegeräte,..</div></div>
<div class="arr" style="left:865px;top:859.0px"><svg width="18" height="18" viewBox="0 0 18 18"><path d="M1.5 9h14.5M9.5 2.5L16 9l-6.5 6.5" fill="none" stroke="#98aab6" stroke-width="2.2" stroke-linecap="round" stroke-linejoin="round"/></svg></div>
<svg class="a" style="left:890px;top:335.5px" width="10" height="15" viewBox="0 0 10 15"><path d="M1.5 1.5l6 6-6 6" fill="none" stroke="#23292f" stroke-width="2.1" stroke-linecap="round" stroke-linejoin="round"/></svg>
<div class="col" style="left:904px"><div class="ch">Generatoren</div></div>
<div class="card" style="left:911px;top:385.5px"><div class="th"><svg width="64" height="48" viewBox="0 0 64 48" style="position:absolute;left:-1px;top:0"><path d="M22 21.5A8 8 0 0 1 30 13.5M25.2 21.5A4.8 4.8 0 0 1 30 16.7" fill="none" stroke="#9be6bd" stroke-width="1"/><rect x="28" y="18.5" width="17" height="13" rx="2" fill="#fff" stroke="#6f7b86" stroke-width="1"/><path d="M29.5 19.6H43.5" stroke="#3f4a55" stroke-width="1.1"/><rect x="31" y="20.8" width="13.5" height="9.8" fill="#fff" stroke="#9aa4ad" stroke-width="0.6"/><path d="M28.6 20v10.5" stroke="#5a6671" stroke-width="1.2"/><path d="M32.2 23.2H38.3M32.2 25.1H38" stroke="#74dca5" stroke-width="1"/><path d="M32.2 28.6H39" stroke="#c9d0d6" stroke-width="0.8"/><path d="M40.5 27.4H43.5" stroke="#9be6bd" stroke-width="0.7"/><path d="M43.4 17.2L47.9 25.4H38.9Z" fill="none" stroke="#5fd99a" stroke-width="1.2" stroke-linejoin="round"/><path d="M43.4 20.5v2.5" stroke="#8be3b2" stroke-width="0.8"/></svg></div><div class="ct" style="top:26px">Einbaugeneratoren</div></div>
<div class="arr" style="left:1259px;top:401.5px"><svg width="18" height="18" viewBox="0 0 18 18"><path d="M1.5 9h14.5M9.5 2.5L16 9l-6.5 6.5" fill="none" stroke="#98aab6" stroke-width="2.2" stroke-linecap="round" stroke-linejoin="round"/></svg></div>
<div class="card w" style="left:911px;top:461.75px"><div class="th"><svg width="64" height="48" viewBox="0 0 64 48" style="position:absolute;left:-1px;top:0"><path d="M22 21.5A8 8 0 0 1 30 13.5M25.2 21.5A4.8 4.8 0 0 1 30 16.7" fill="none" stroke="#9be6bd" stroke-width="1"/><rect x="28" y="18.5" width="17" height="13" rx="2" fill="#fff" stroke="#6f7b86" stroke-width="1"/><path d="M29.5 19.6H43.5" stroke="#3f4a55" stroke-width="1.1"/><rect x="31" y="20.8" width="13.5" height="9.8" fill="#fff" stroke="#9aa4ad" stroke-width="0.6"/><path d="M28.6 20v10.5" stroke="#5a6671" stroke-width="1.2"/><path d="M32.2 23.2H38.3M32.2 25.1H38" stroke="#74dca5" stroke-width="1"/><path d="M32.2 28.6H39" stroke="#c9d0d6" stroke-width="0.8"/><path d="M40.5 27.4H43.5" stroke="#9be6bd" stroke-width="0.7"/><path d="M43.4 17.2L47.9 25.4H38.9Z" fill="none" stroke="#5fd99a" stroke-width="1.2" stroke-linejoin="round"/><path d="M43.4 20.5v2.5" stroke="#8be3b2" stroke-width="0.8"/></svg></div><div class="ct" style="top:26px">Mobile Generatoren</div></div>
<div class="arr" style="left:1259px;top:477.75px"><svg width="18" height="18" viewBox="0 0 18 18"><path d="M1.5 9h14.5M9.5 2.5L16 9l-6.5 6.5" fill="none" stroke="#0a0a0a" stroke-width="2.3" stroke-linecap="round" stroke-linejoin="round"/></svg></div>
<div class="card" style="left:911px;top:538.0px"><div class="th"><svg width="64" height="48" viewBox="0 0 64 48" style="position:absolute;left:-1px;top:0"><path d="M22 21.5A8 8 0 0 1 30 13.5M25.2 21.5A4.8 4.8 0 0 1 30 16.7" fill="none" stroke="#9be6bd" stroke-width="1"/><rect x="28" y="18.5" width="17" height="13" rx="2" fill="#fff" stroke="#6f7b86" stroke-width="1"/><path d="M29.5 19.6H43.5" stroke="#3f4a55" stroke-width="1.1"/><rect x="31" y="20.8" width="13.5" height="9.8" fill="#fff" stroke="#9aa4ad" stroke-width="0.6"/><path d="M28.6 20v10.5" stroke="#5a6671" stroke-width="1.2"/><path d="M32.2 23.2H38.3M32.2 25.1H38" stroke="#74dca5" stroke-width="1"/><path d="M32.2 28.6H39" stroke="#c9d0d6" stroke-width="0.8"/><path d="M40.5 27.4H43.5" stroke="#9be6bd" stroke-width="0.7"/><path d="M43.4 17.2L47.9 25.4H38.9Z" fill="none" stroke="#5fd99a" stroke-width="1.2" stroke-linejoin="round"/><path d="M43.4 20.5v2.5" stroke="#8be3b2" stroke-width="0.8"/></svg></div><div class="ct" style="top:26px">Stationäre Generatoren</div></div>
<div class="arr" style="left:1259px;top:554.0px"><svg width="18" height="18" viewBox="0 0 18 18"><path d="M1.5 9h14.5M9.5 2.5L16 9l-6.5 6.5" fill="none" stroke="#98aab6" stroke-width="2.2" stroke-linecap="round" stroke-linejoin="round"/></svg></div>
<svg class="a" style="left:1284px;top:335.5px" width="10" height="15" viewBox="0 0 10 15"><path d="M1.5 1.5l6 6-6 6" fill="none" stroke="#23292f" stroke-width="2.1" stroke-linecap="round" stroke-linejoin="round"/></svg>
<div class="col" style="left:1298px"><div class="ch">Mobile Generatoren</div></div>
<div class="card w" style="left:1305px;top:385.5px"><div class="th"><svg width="64" height="48" viewBox="0 0 64 48" style="position:absolute;left:-1px;top:0"><path d="M34.5 11.2L39.2 12.7 51.3 25.5Q52.5 27 51 28.4L40.2 38.2 34.7 38.5 45 27.5Q46.4 26 45.5 24.5Z" fill="#b8c4ce"/><path d="M39.2 12.7L51.3 25.5Q52.5 27 51 28.4L40.2 38.2" fill="none" stroke="#1a2d3e" stroke-width="1.5" stroke-linejoin="round"/><path d="M31.6 39L17.4 23.6Q16.4 22.3 16.7 20.6L18.1 11.8Q18.6 9.6 20.8 9.6L32 9.9Q33.6 10.1 34.6 11.1L45.4 24.3Q46.5 25.9 45 27.4L34.7 38.4" fill="none" stroke="#15293b" stroke-width="1.8" stroke-linejoin="round"/><circle cx="25.6" cy="17.2" r="2.6" fill="#b0bdc7"/><path d="M23 17.2A2.6 2.6 0 0 1 28.2 17.2" fill="none" stroke="#15293b" stroke-width="1.3"/></svg></div><div class="ct" style="top:26px">EU 20i</div></div>
<div class="card w" style="left:1305px;top:461.75px"><div class="th"><svg width="64" height="48" viewBox="0 0 64 48" style="position:absolute;left:-1px;top:0"><path d="M34.5 11.2L39.2 12.7 51.3 25.5Q52.5 27 51 28.4L40.2 38.2 34.7 38.5 45 27.5Q46.4 26 45.5 24.5Z" fill="#b8c4ce"/><path d="M39.2 12.7L51.3 25.5Q52.5 27 51 28.4L40.2 38.2" fill="none" stroke="#1a2d3e" stroke-width="1.5" stroke-linejoin="round"/><path d="M31.6 39L17.4 23.6Q16.4 22.3 16.7 20.6L18.1 11.8Q18.6 9.6 20.8 9.6L32 9.9Q33.6 10.1 34.6 11.1L45.4 24.3Q46.5 25.9 45 27.4L34.7 38.4" fill="none" stroke="#15293b" stroke-width="1.8" stroke-linejoin="round"/><circle cx="25.6" cy="17.2" r="2.6" fill="#b0bdc7"/><path d="M23 17.2A2.6 2.6 0 0 1 28.2 17.2" fill="none" stroke="#15293b" stroke-width="1.3"/></svg></div><div class="ct" style="top:26px">EU 30i</div></div>
<div class="card w" style="left:1305px;top:538.0px"><div class="th"><svg width="64" height="48" viewBox="0 0 64 48" style="position:absolute;left:-1px;top:0"><path d="M34.5 11.2L39.2 12.7 51.3 25.5Q52.5 27 51 28.4L40.2 38.2 34.7 38.5 45 27.5Q46.4 26 45.5 24.5Z" fill="#b8c4ce"/><path d="M39.2 12.7L51.3 25.5Q52.5 27 51 28.4L40.2 38.2" fill="none" stroke="#1a2d3e" stroke-width="1.5" stroke-linejoin="round"/><path d="M31.6 39L17.4 23.6Q16.4 22.3 16.7 20.6L18.1 11.8Q18.6 9.6 20.8 9.6L32 9.9Q33.6 10.1 34.6 11.1L45.4 24.3Q46.5 25.9 45 27.4L34.7 38.4" fill="none" stroke="#15293b" stroke-width="1.8" stroke-linejoin="round"/><circle cx="25.6" cy="17.2" r="2.6" fill="#b0bdc7"/><path d="M23 17.2A2.6 2.6 0 0 1 28.2 17.2" fill="none" stroke="#15293b" stroke-width="1.3"/></svg></div><div class="ct" style="top:26px">FM 5,4 H</div></div>
<div class="card w" style="left:1305px;top:614.25px"><div class="th"><svg width="64" height="48" viewBox="0 0 64 48" style="position:absolute;left:-1px;top:0"><path d="M34.5 11.2L39.2 12.7 51.3 25.5Q52.5 27 51 28.4L40.2 38.2 34.7 38.5 45 27.5Q46.4 26 45.5 24.5Z" fill="#b8c4ce"/><path d="M39.2 12.7L51.3 25.5Q52.5 27 51 28.4L40.2 38.2" fill="none" stroke="#1a2d3e" stroke-width="1.5" stroke-linejoin="round"/><path d="M31.6 39L17.4 23.6Q16.4 22.3 16.7 20.6L18.1 11.8Q18.6 9.6 20.8 9.6L32 9.9Q33.6 10.1 34.6 11.1L45.4 24.3Q46.5 25.9 45 27.4L34.7 38.4" fill="none" stroke="#15293b" stroke-width="1.8" stroke-linejoin="round"/><circle cx="25.6" cy="17.2" r="2.6" fill="#b0bdc7"/><path d="M23 17.2A2.6 2.6 0 0 1 28.2 17.2" fill="none" stroke="#15293b" stroke-width="1.3"/></svg></div><div class="ct" style="top:26px">FM 7,5 H</div></div>
<div class="card w" style="left:1305px;top:690.5px"><div class="th"><svg width="64" height="48" viewBox="0 0 64 48" style="position:absolute;left:-1px;top:0"><path d="M22 21.5A8 8 0 0 1 30 13.5M25.2 21.5A4.8 4.8 0 0 1 30 16.7" fill="none" stroke="#9be6bd" stroke-width="1"/><rect x="28" y="18.5" width="17" height="13" rx="2" fill="#fff" stroke="#6f7b86" stroke-width="1"/><path d="M29.5 19.6H43.5" stroke="#3f4a55" stroke-width="1.1"/><rect x="31" y="20.8" width="13.5" height="9.8" fill="#fff" stroke="#9aa4ad" stroke-width="0.6"/><path d="M28.6 20v10.5" stroke="#5a6671" stroke-width="1.2"/><path d="M32.2 23.2H38.3M32.2 25.1H38" stroke="#74dca5" stroke-width="1"/><path d="M32.2 28.6H39" stroke="#c9d0d6" stroke-width="0.8"/><path d="M40.5 27.4H43.5" stroke="#9be6bd" stroke-width="0.7"/><path d="M43.4 17.2L47.9 25.4H38.9Z" fill="none" stroke="#5fd99a" stroke-width="1.2" stroke-linejoin="round"/><path d="M43.4 20.5v2.5" stroke="#8be3b2" stroke-width="0.8"/></svg></div><div class="ct" style="top:12px;line-height:22.3px">Mobile Generatoren Benzin<br>Divers</div></div>
<div class="card w" style="left:1305px;top:766.75px"><div class="th"><svg width="64" height="48" viewBox="0 0 64 48" style="position:absolute;left:-1px;top:0"><path d="M22 21.5A8 8 0 0 1 30 13.5M25.2 21.5A4.8 4.8 0 0 1 30 16.7" fill="none" stroke="#9be6bd" stroke-width="1"/><rect x="28" y="18.5" width="17" height="13" rx="2" fill="#fff" stroke="#6f7b86" stroke-width="1"/><path d="M29.5 19.6H43.5" stroke="#3f4a55" stroke-width="1.1"/><rect x="31" y="20.8" width="13.5" height="9.8" fill="#fff" stroke="#9aa4ad" stroke-width="0.6"/><path d="M28.6 20v10.5" stroke="#5a6671" stroke-width="1.2"/><path d="M32.2 23.2H38.3M32.2 25.1H38" stroke="#74dca5" stroke-width="1"/><path d="M32.2 28.6H39" stroke="#c9d0d6" stroke-width="0.8"/><path d="M40.5 27.4H43.5" stroke="#9be6bd" stroke-width="0.7"/><path d="M43.4 17.2L47.9 25.4H38.9Z" fill="none" stroke="#5fd99a" stroke-width="1.2" stroke-linejoin="round"/><path d="M43.4 20.5v2.5" stroke="#8be3b2" stroke-width="0.8"/></svg></div><div class="ct" style="top:12px;line-height:22.3px">Mobile Generatoren Diesel<br>Divers</div></div>
<div class="card w" style="left:1305px;top:843.0px"><div class="th"><svg width="64" height="48" viewBox="0 0 64 48" style="position:absolute;left:-1px;top:0"><path d="M22 21.5A8 8 0 0 1 30 13.5M25.2 21.5A4.8 4.8 0 0 1 30 16.7" fill="none" stroke="#9be6bd" stroke-width="1"/><rect x="28" y="18.5" width="17" height="13" rx="2" fill="#fff" stroke="#6f7b86" stroke-width="1"/><path d="M29.5 19.6H43.5" stroke="#3f4a55" stroke-width="1.1"/><rect x="31" y="20.8" width="13.5" height="9.8" fill="#fff" stroke="#9aa4ad" stroke-width="0.6"/><path d="M28.6 20v10.5" stroke="#5a6671" stroke-width="1.2"/><path d="M32.2 23.2H38.3M32.2 25.1H38" stroke="#74dca5" stroke-width="1"/><path d="M32.2 28.6H39" stroke="#c9d0d6" stroke-width="0.8"/><path d="M40.5 27.4H43.5" stroke="#9be6bd" stroke-width="0.7"/><path d="M43.4 17.2L47.9 25.4H38.9Z" fill="none" stroke="#5fd99a" stroke-width="1.2" stroke-linejoin="round"/><path d="M43.4 20.5v2.5" stroke="#8be3b2" stroke-width="0.8"/></svg></div><div class="ct" style="top:26px">Mobile Generatoren Divers</div></div>
<div class="card w" style="left:1305px;top:919.25px"><div class="th"><svg width="64" height="48" viewBox="0 0 64 48" style="position:absolute;left:-1px;top:0"><path d="M34.5 11.2L39.2 12.7 51.3 25.5Q52.5 27 51 28.4L40.2 38.2 34.7 38.5 45 27.5Q46.4 26 45.5 24.5Z" fill="#b8c4ce"/><path d="M39.2 12.7L51.3 25.5Q52.5 27 51 28.4L40.2 38.2" fill="none" stroke="#1a2d3e" stroke-width="1.5" stroke-linejoin="round"/><path d="M31.6 39L17.4 23.6Q16.4 22.3 16.7 20.6L18.1 11.8Q18.6 9.6 20.8 9.6L32 9.9Q33.6 10.1 34.6 11.1L45.4 24.3Q46.5 25.9 45 27.4L34.7 38.4" fill="none" stroke="#15293b" stroke-width="1.8" stroke-linejoin="round"/><circle cx="25.6" cy="17.2" r="2.6" fill="#b0bdc7"/><path d="M23 17.2A2.6 2.6 0 0 1 28.2 17.2" fill="none" stroke="#15293b" stroke-width="1.3"/></svg></div><div class="ct" style="top:26px">PD 7,4 Y DIESEL</div></div>
</div>
<div class="a" style="left:116px;top:989px;width:1422px;height:4.5px;border-radius:2.5px;background:#cfd8e0"></div>
<div class="a" style="left:116px;top:989px;width:1306px;height:4.5px;border-radius:2.5px;background:#bfcad3"></div>
<div class="a" style="left:73px;top:999.5px;width:1528px;height:1.5px;background:#c3ccd4"></div>
<div class="a" style="left:1587px;top:78px;width:9px;height:897px;border-radius:4.5px;background:#d0d9e1"></div>
<div class="a" style="left:1587px;top:147px;width:9px;height:573px;border-radius:4.5px;background:#c1cbd4"></div>
<div class="a" style="left:1577px;top:975px;width:24px;height:26px;background:#dde2ea"></div>
<div class="a" style="left:1534px;top:937px;width:43px;height:43px;border-radius:50%;background:#a4b4be;box-shadow:0 2px 4px rgba(0,0,0,0.12)"><svg style="position:absolute;left:12px;top:12px" width="19" height="19" viewBox="0 0 19 19"><path d="M9.5 17V2.5M3 9l6.5-6.5L16 9" fill="none" stroke="#fff" stroke-width="1.9" stroke-linecap="round" stroke-linejoin="round"/></svg></div>
</body></html>
